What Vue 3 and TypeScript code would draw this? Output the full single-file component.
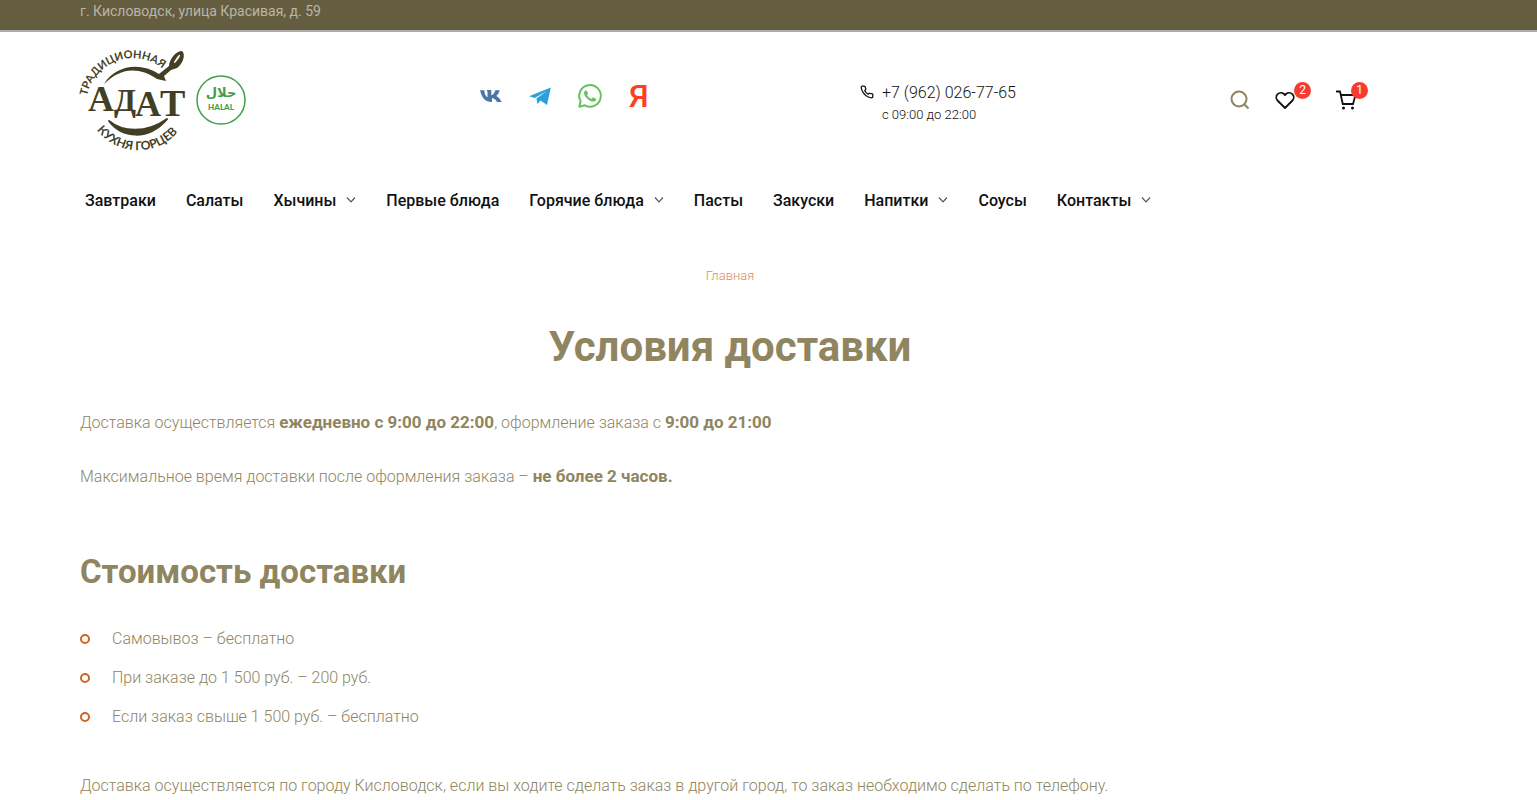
<script setup lang="ts">
interface NavItem {
  title: string
  children?: boolean
}

const navItems: NavItem[] = [
  { title: 'Завтраки' },
  { title: 'Салаты' },
  { title: 'Хычины', children: true },
  { title: 'Первые блюда' },
  { title: 'Горячие блюда', children: true },
  { title: 'Пасты' },
  { title: 'Закуски' },
  { title: 'Напитки', children: true },
  { title: 'Соусы' },
  { title: 'Контакты', children: true },
]

const prices: string[] = [
  'Самовывоз – бесплатно',
  'При заказе до 1 500 руб. – 200 руб.',
  'Если заказ свыше 1 500 руб. – бесплатно',
]

const wishlistCount = 2
const cartCount = 1
</script>

<template>
  <div class="page">
    <div class="topbar">г. Кисловодск, улица Красивая, д. 59</div>

    <header class="header">
      <div class="brand">
        <a href="#" class="logo" aria-label="АДАТ">
          <svg width="106" height="100" viewBox="0 0 106 100">
            <defs>
              <path id="arc-top" d="M7 46A47 47 0 0 1 94 32" />
              <path id="arc-bottom" d="M17 80A52 52 0 0 0 107 66" />
            </defs>
            <g fill="#423f24" font-family="Lato, 'Open Sans', sans-serif" font-weight="700">
              <text font-size="11"><textPath href="#arc-top">ТРАДИЦИОННАЯ</textPath></text>
              <text font-size="12"><textPath href="#arc-bottom">КУХНЯ ГОРЦЕВ</textPath></text>
            </g>
            <path d="M24 34C36 15 60 12 79 24L89 16C89 9 97 0 102 1C106 4 103 14 97 18L91 20L84 26L86 31L77 29C58 16 40 18 24 34Z" fill="#423f24" />
            <ellipse cx="97" cy="9" rx="1" ry="5" transform="rotate(35 97 9)" fill="#fff" />
            <path d="M29 71C42 82 66 84 87 69C68 91 42 88 29 71Z" fill="#423f24" stroke="#423f24" stroke-width="2" stroke-linejoin="round" />
            <g fill="#423f24" font-family="'Liberation Serif', serif" font-weight="700">
              <text x="8" y="61" font-size="36">А</text>
              <text x="34" y="61" font-size="32">Д</text>
              <text x="55" y="66" font-size="36">А</text>
              <text x="80" y="66" font-size="38">Т</text>
            </g>
          </svg>
        </a>
        <svg class="halal" width="50" height="50" viewBox="0 0 50 50" role="img" aria-label="Halal">
          <circle cx="25" cy="25" r="24" fill="none" stroke="#3fa04b" stroke-width="1.5" />
          <g fill="#3fa04b" text-anchor="middle">
            <text x="25" y="22" font-size="13" font-weight="700" font-family="'DejaVu Sans', sans-serif">حلال</text>
            <text x="25" y="35" font-size="8" font-weight="900" font-family="Lato, sans-serif">HALAL</text>
          </g>
        </svg>
      </div>

      <div class="social">
        <a href="#" aria-label="ВКонтакте">
          <svg width="22" height="24" viewBox="0 0 22 24">
            <path fill="#4a76a8" d="M12 18C5 18 1.800 13.500 0 6.200H4.200C4.400 10 6 12.600 7.500 13.200V7.500L6.600 6H11.300V11.300C12.900 11 14.500 9 15.300 6.200H19.700C19.200 9 17.500 11 16.300 12C17.800 12.700 20 14.700 21.700 18H17C16 16 14 14.300 12 14V18Z" />
          </svg>
        </a>
        <a href="#" aria-label="Telegram">
          <svg width="22" height="24" viewBox="0 0 22 24">
            <path fill="#2ba0da" d="M0 12.300L21.800 3.500L18 21L11.500 16.400L8.600 20L7.400 14.600L18 7L5.700 13.900Z" />
          </svg>
        </a>
        <a href="#" aria-label="WhatsApp">
          <svg width="24" height="24" viewBox="0 0 24 24">
            <path fill="#67c15e" d="M17.472 14.382c-.297-.149-1.758-.867-2.030-.967-.273-.099-.471-.148-.670.150-.197.297-.767.966-.940 1.164-.173.199-.347.223-.644.075-.297-.150-1.255-.463-2.390-1.475-.883-.788-1.480-1.761-1.653-2.059-.173-.297-.018-.458.130-.606.134-.133.298-.347.446-.520.149-.174.198-.298.298-.497.099-.198.050-.371-.025-.520-.075-.149-.669-1.612-.916-2.207-.242-.579-.487-.500-.669-.510-.173-.008-.371-.010-.570-.010-.198 0-.520.074-.792.372-.272.297-1.040 1.016-1.040 2.479 0 1.462 1.065 2.875 1.213 3.074.149.198 2.096 3.200 5.077 4.487.709.306 1.262.489 1.694.625.712.227 1.360.195 1.871.118.571-.085 1.758-.719 2.006-1.413.248-.694.248-1.289.173-1.413-.074-.124-.272-.198-.570-.347" />
            <path fill="none" stroke="#67c15e" stroke-width="2" stroke-linejoin="round" d="M1.300 22.700L2.700 17.300A10.800 10.800 0 1 1 6.800 21.300Z" />
          </svg>
        </a>
        <a href="#" class="yandex" aria-label="Яндекс">Я</a>
      </div>

      <div class="contacts">
        <div class="phone">
          <svg width="14" height="14" viewBox="0 0 24 24" fill="none" stroke="#111" stroke-width="2.200" stroke-linejoin="round">
            <path d="M22 16.900v3a2 2 0 0 1-2.200 2 19.800 19.800 0 0 1-8.600-3.100 19.500 19.500 0 0 1-6-6A19.800 19.800 0 0 1 2.100 4.200 2 2 0 0 1 4.100 2h3a2 2 0 0 1 2 1.700c.1 1 .4 1.900.7 2.800a2 2 0 0 1-.5 2.100L8.100 9.900a16 16 0 0 0 6 6l1.300-1.300a2 2 0 0 1 2.100-.4c.9.300 1.800.5 2.800.7a2 2 0 0 1 1.700 2z" />
          </svg>
          <div>
            <a href="tel:+79620267765" class="number">+7 (962) 026-77-65</a>
            <div class="hours">с 09:00 до 22:00</div>
          </div>
        </div>

        <div class="actions">
          <button type="button" aria-label="Поиск">
            <svg width="20" height="20" viewBox="0 0 20 20" fill="none" stroke="#8f8560" stroke-width="2">
              <circle cx="9" cy="9" r="7.500" /><path d="M14.500 14.500L18.500 18.500" />
            </svg>
          </button>
          <a href="#" class="wish" aria-label="Избранное">
            <svg width="20" height="20" viewBox="0 0 20 20" fill="none" stroke="#111" stroke-width="1.800" stroke-linejoin="round">
              <path d="M10 18L2.500 10.500A4.600 4.600 0 0 1 9 4L10 5L11 4A4.600 4.600 0 0 1 17.500 10.500Z" />
            </svg>
            <span class="badge">{{ wishlistCount }}</span>
          </a>
          <a href="#" class="cart" aria-label="Корзина">
            <svg width="20" height="20" viewBox="0 0 20 20" fill="none" stroke="#111" stroke-width="1.800">
              <path d="M0 1.500H4L6.800 14H17L19.500 5H5" />
              <circle cx="7.500" cy="18" r="1.500" fill="#111" stroke="none" />
              <circle cx="16.500" cy="18" r="1.500" fill="#111" stroke="none" />
            </svg>
            <span class="badge">{{ cartCount }}</span>
          </a>
        </div>
      </div>
    </header>

    <nav class="nav">
      <a v-for="item in navItems" :key="item.title" href="#">
        {{ item.title }}
        <svg v-if="item.children" width="10" height="8" viewBox="0 0 10 8" fill="none" stroke="#555" stroke-width="1.200">
          <path d="M1 0.500L5 4.800L9 0.500" />
        </svg>
      </a>
    </nav>

    <main class="content">
      <div class="crumbs"><a href="#">Главная</a></div>
      <h1>Условия доставки</h1>
      <p>Доставка осуществляется <b>ежедневно с 9:00 до 22:00</b>, оформление заказа с <b>9:00 до 21:00</b></p>
      <p>Максимальное время доставки после оформления заказа – <b>не более 2 часов.</b></p>
      <h2>Стоимость доставки</h2>
      <ul>
        <li v-for="price in prices" :key="price">{{ price }}</li>
      </ul>
      <p>Доставка осуществляется по городу Кисловодск, если вы ходите сделать заказ в другой город, то заказ необходимо сделать по телефону.</p>
    </main>
  </div>
</template>

<style>
body {
  background: #fff;
}
</style>

<style scoped>
.page {
  font-family: Roboto, sans-serif;
  font-size: 16px;
  font-weight: 300;
  line-height: 24px;
  color: #8f8560;
}
a {
  color: inherit;
  text-decoration: none;
}
svg {
  display: block;
  overflow: visible;
}
.topbar {
  padding: 0 157px 7px 80px;
  background: #655d40;
  border-bottom: 2px solid #adacaa;
  color: #b9b5a9;
  font-size: 14px;
  font-weight: 400;
  line-height: 23px;
}
.header {
  display: grid;
  grid-template-columns: 400fr 380fr 520fr;
  align-items: center;
  padding: 18px 157px 0 80px;
}
.brand {
  display: flex;
  align-items: center;
  gap: 10px;
}
.social {
  display: flex;
  align-items: center;
  gap: 27px;
  padding-bottom: 8px;
}
.yandex {
  color: #fc3f1d;
  font-size: 32px;
  font-weight: 500;
}
.contacts {
  display: flex;
  justify-content: space-between;
  align-items: center;
  padding-right: 24px;
  color: #111;
}
.phone {
  display: flex;
  gap: 8px;
  padding-top: 8px;
}
.phone svg {
  margin-top: 3px;
}
.number {
  display: block;
  line-height: 22px;
}
.hours {
  font-size: 13px;
  line-height: 22px;
}
.actions {
  display: flex;
  align-items: center;
  gap: 25px;
}
.actions a,
.actions button {
  position: relative;
  padding: 0;
  border: 0;
  background: none;
}
.actions .wish {
  margin-right: 16px;
}
.badge {
  position: absolute;
  top: -8px;
  left: 19px;
  width: 17px;
  border-radius: 9px;
  background: #f93a2f;
  color: #fff;
  font-size: 12px;
  font-weight: 400;
  line-height: 17px;
  text-align: center;
}
.cart .badge {
  left: 15px;
}
.nav {
  display: flex;
  gap: 30px;
  padding: 39px 157px 0 85px;
  color: #111;
  font-size: 16px;
  font-weight: 500;
}
.nav a {
  display: flex;
  align-items: center;
  gap: 10px;
  white-space: nowrap;
}
.content {
  padding: 51px 157px 0 80px;
}
.crumbs {
  color: #e08a5a;
  font-size: 13px;
  text-align: center;
}
h1,
h2 {
  margin: 0;
  font-weight: 700;
}
h1 {
  margin: 35px 0 40px;
  font-size: 42px;
  line-height: 48px;
  text-align: center;
}
p {
  margin: 0 0 30px;
}
p:last-child {
  margin-bottom: 0;
}
b {
  font-size: 17px;
  font-weight: 700;
  line-height: 20px;
}
h2 {
  margin: 63px 0 35px;
  font-size: 33px;
  line-height: 40px;
}
ul {
  display: grid;
  gap: 15px;
  margin: 0 0 45px;
  padding: 0;
  list-style: none;
}
li {
  display: flex;
  align-items: center;
  gap: 22px;
}
li::before {
  content: '';
  box-sizing: border-box;
  width: 10px;
  height: 10px;
  border: 2px solid #cb6626;
  border-radius: 50%;
}
</style>
